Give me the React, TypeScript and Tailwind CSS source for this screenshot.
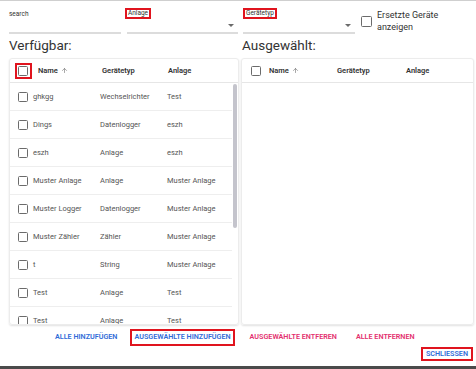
import { ArrowUp } from "lucide-react";

type Device = { name: string; type: string; plant: string };

const devices: Device[] = [
  { name: "ghkgg", type: "Wechselrichter", plant: "Test" },
  { name: "Dings", type: "Datenlogger", plant: "eszh" },
  { name: "eszh", type: "Anlage", plant: "eszh" },
  { name: "Muster Anlage", type: "Anlage", plant: "Muster Anlage" },
  { name: "Muster Logger", type: "Datenlogger", plant: "Muster Anlage" },
  { name: "Muster Zähler", type: "Zähler", plant: "Muster Anlage" },
  { name: "t", type: "String", plant: "Muster Anlage" },
  { name: "Test", type: "Anlage", plant: "Test" },
  { name: "Test", type: "Anlage", plant: "Test" },
];

function Box({ className = "" }: { className?: string }) {
  return <span className={`block h-[10px] w-[10px] rounded-[1.5px] border-[1.5px] border-[#6b6b6b] ${className}`} />;
}

function Caret() {
  return <span className="mb-[5px] mr-[4px] h-0 w-0 border-x-[3px] border-t-[3px] border-x-transparent border-t-[#6b6b6b]" />;
}

function TableHeader({ boxed }: { boxed?: boolean }) {
  return (
    <div className="flex h-[24px] shrink-0 items-center border-b border-[#e6e6e6] text-[7.5px] font-semibold text-[#333]">
      <div className="flex w-[26px] justify-center">
        {boxed ? (
          <span className="flex h-[16px] w-[17px] items-center justify-center border-2 border-[#e0141e]">
            <Box />
          </span>
        ) : (
          <Box />
        )}
      </div>
      <div className="flex w-[66px] items-center gap-[3px] pl-[2px]">
        Name <ArrowUp className="h-[7px] w-[7px] text-[#777]" strokeWidth={2.2} />
      </div>
      <div className="w-[66px]">Gerätetyp</div>
      <div>Anlage</div>
    </div>
  );
}

export default function App() {
  return (
    <div className="flex h-[369px] w-[476px] flex-col overflow-hidden border-t border-b-[3px] border-t-[#cfcfcf] border-b-[#4a4a4a] bg-white font-['Roboto',sans-serif]">
      <div className="flex h-[33px] shrink-0 items-start pl-[9px] pt-[7px]">
        <div className="flex w-[112px] flex-col">
          <span className="h-[11px] pt-[1px] text-[6.5px] leading-[10px] text-[#333]">search</span>
          <div className="h-[13px]" />
          <div className="h-[1.5px] bg-[#dcdcdc]" />
        </div>
        <div className="ml-[6px] flex w-[111px] flex-col">
          <span className="-ml-[2px] h-[11px] w-fit border-2 border-[#e0141e] px-[1px] text-[6.5px] leading-[7px] text-[#333]">Anlage</span>
          <div className="flex h-[13px] items-end justify-end">
            <Caret />
          </div>
          <div className="h-[1.5px] bg-[#dcdcdc]" />
        </div>
        <div className="ml-[5px] flex w-[112px] flex-col">
          <span className="h-[11px] w-fit border-2 border-[#e0141e] px-[1px] text-[6.5px] leading-[7px] text-[#333]">Gerätetyp</span>
          <div className="flex h-[13px] items-end justify-end">
            <Caret />
          </div>
          <div className="h-[1.5px] bg-[#dcdcdc]" />
        </div>
        <div className="ml-[6px] flex items-start gap-[5px] pt-[8px]">
          <Box className="h-[11px] w-[11px]" />
          <span className="-mt-[7px] text-[9px] leading-[12px] text-[#333]">
            Ersetzte Geräte
            <br />
            anzeigen
          </span>
        </div>
      </div>

      <div className="flex shrink-0 pl-[9px]">
        <h2 className="h-[24px] w-[233px] pt-[3px] text-[13.5px] leading-[16px] text-[#333]">Verfügbar:</h2>
        <h2 className="h-[24px] pt-[3px] text-[13.5px] leading-[16px] text-[#333]">Ausgewählt:</h2>
      </div>

      <div className="flex h-[267px] shrink-0 gap-[2px] pl-[9px]">
        <div className="flex w-[230px] flex-col overflow-hidden rounded-[3px] border border-[#ececec] shadow-[0_1px_2px_rgba(0,0,0,0.12)]">
          <TableHeader boxed />
          <div className="relative flex-1 overflow-hidden">
            {devices.map((d, i) => (
              <div
                key={i}
                className="mr-[6px] flex h-[28px] items-center border-b border-[#eeeeee] text-[7.5px] text-[#555]"
              >
                <div className="flex w-[23px] justify-center pl-[2px]">
                  <Box />
                </div>
                <div className="w-[67px]">{d.name}</div>
                <div className="w-[67px]">{d.type}</div>
                <div>{d.plant}</div>
              </div>
            ))}
            <div className="absolute right-[1px] top-[1px] h-[144px] w-[4px] rounded-full bg-[#c4c4cc]" />
          </div>
        </div>

        <div className="flex w-[233px] flex-col overflow-hidden rounded-[3px] border border-[#ececec] shadow-[0_1px_2px_rgba(0,0,0,0.12)]">
          <div className="flex h-[24px] shrink-0 items-center border-b border-[#e6e6e6] text-[7.5px] font-semibold text-[#333]">
            <div className="flex w-[26px] justify-center pl-[1px]">
              <Box />
            </div>
            <div className="flex w-[69px] items-center gap-[3px] pl-[1px]">
              Name <ArrowUp className="h-[7px] w-[7px] text-[#777]" strokeWidth={2.2} />
            </div>
            <div className="w-[69px]">Gerätetyp</div>
            <div>Anlage</div>
          </div>
        </div>
      </div>

      <div className="flex h-[22px] shrink-0 items-center pt-[2px] text-[7.2px] font-semibold uppercase">
        <span className="ml-[55px] text-[#2f6bd8]">Alle hinzufügen</span>
        <span className="ml-[13px] flex h-[17px] items-center border-2 border-[#e0141e] px-[2px] text-[#2f6bd8]">
          Ausgewählte hinzufügen
        </span>
        <span className="ml-[15px] text-[#e3306e]">Ausgewählte entferen</span>
        <span className="ml-[19px] text-[#e3306e]">Alle entfernen</span>
      </div>

      <div className="flex shrink-0 justify-end pr-[3px]">
        <span className="flex h-[14px] items-center border-2 border-[#e0141e] px-[3px] text-[7.2px] font-semibold uppercase text-[#2f6bd8]">
          Schliessen
        </span>
      </div>
    </div>
  );
}
